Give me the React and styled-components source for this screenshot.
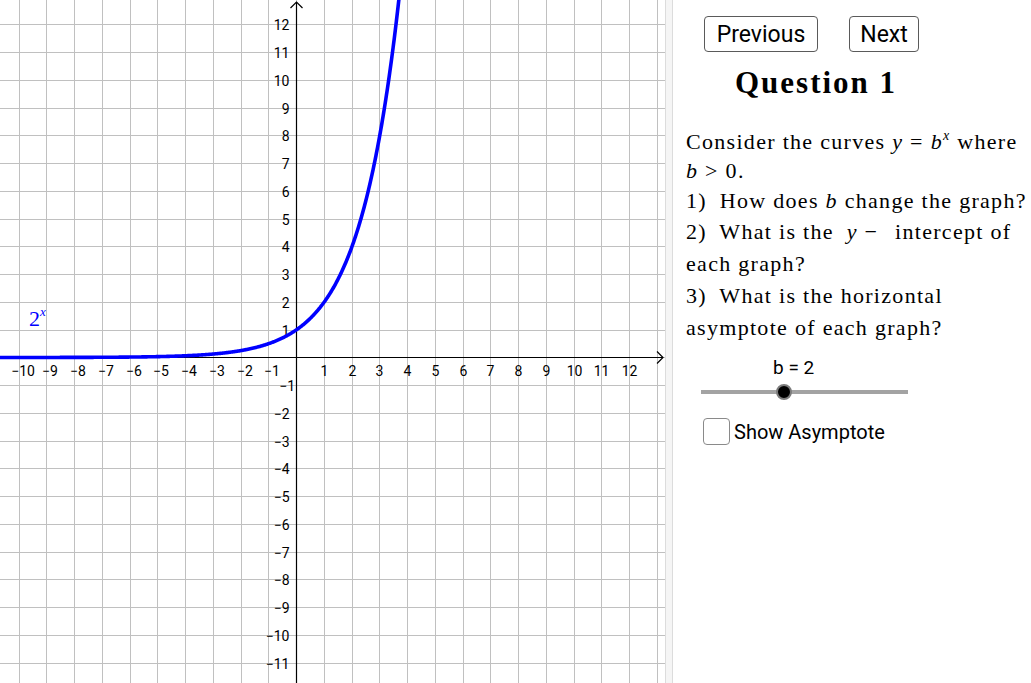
import React, { useState } from "react";
import styled, { createGlobalStyle } from "styled-components";

const GlobalStyle = createGlobalStyle`
  html, body {
    margin: 0;
    padding: 0;
    background: #ffffff;
    overflow: hidden;
  }
`;

const U = 27.75;
const OX = 296;
const OY = 357.3;
const W = 665;
const H = 683;

const px = (k) => Math.round(OX + k * U) + 0.5;
const py = (k) => Math.round(OY - k * U) + 0.5;

const Page = styled.div`
  display: flex;
  width: 1031px;
  height: 683px;
  font-family: Roboto, "Liberation Sans", sans-serif;
`;

const GraphPanel = styled.div`
  width: ${W}px;
  height: ${H}px;
  flex: none;
  background: #ffffff;
  overflow: hidden;
`;

const Divider = styled.div`
  width: 6px;
  flex: none;
  background: #f5f5f5;
  border-left: 1px solid #dcdcdc;
  border-right: 1px solid #dcdcdc;
`;

const SidePanel = styled.div`
  flex: 1;
  display: flex;
  flex-direction: column;
  padding-top: 16px;
`;

const ButtonRow = styled.div`
  display: flex;
  gap: 31px;
  padding-left: 31px;
`;

const NavButton = styled.button`
  width: ${({ $w }) => $w}px;
  height: 36px;
  padding: 0;
  background: #ffffff;
  border: 1.3px solid #5a5a5a;
  border-radius: 4px;
  font-family: Roboto, "Liberation Sans", sans-serif;
  font-size: 23px;
  color: #000000;
  cursor: pointer;

  &:hover {
    background: #f4f4f4;
  }
`;

const Title = styled.h1`
  margin: 13px 0 0 62px;
  font-family: "Liberation Serif", "DejaVu Serif", serif;
  font-weight: bold;
  font-size: 31px;
  line-height: 36px;
  letter-spacing: 2px;
  color: #000000;
`;

const Body = styled.div`
  margin-top: 26px;
  padding-left: 13px;
  font-family: "Liberation Serif", "DejaVu Serif", serif;
  font-size: 22px;
  letter-spacing: 1.3px;
  color: #000000;
  white-space: nowrap;
`;

const Line = styled.div`
  height: ${({ $h }) => $h}px;
  line-height: ${({ $h }) => $h}px;
`;

const M = styled.i`
  font-style: italic;
`;

const Sup = styled.sup`
  font-size: 14px;
  font-style: italic;
  vertical-align: 9px;
  line-height: 0;
`;

const Gap = styled.span`
  display: inline-block;
  width: ${({ $w }) => $w}px;
`;

const SliderBlock = styled.div`
  margin-top: 13px;
  display: flex;
  flex-direction: column;
`;

const SliderLabel = styled.div`
  padding-left: 100px;
  font-size: 19px;
  line-height: 22px;
  color: #000000;
`;

const Range = styled.input`
  -webkit-appearance: none;
  appearance: none;
  margin: 5px 0 0 20px;
  width: 223px;
  height: 16px;
  background: transparent;
  cursor: pointer;

  &::-webkit-slider-runnable-track {
    height: 16px;
    background: linear-gradient(#a3a3a3, #a3a3a3) 8px 50% / calc(100% - 16px) 4px no-repeat;
  }

  &::-webkit-slider-thumb {
    -webkit-appearance: none;
    width: 16px;
    height: 16px;
    border-radius: 50%;
    background: #000000;
    border: 2px solid #7c7c7c;
    box-sizing: border-box;
  }
`;

const CheckRow = styled.label`
  margin: 18px 0 0 30px;
  display: flex;
  align-items: center;
  gap: 4px;
  cursor: pointer;
  font-size: 20px;
  color: #000000;
`;

const HiddenInput = styled.input`
  display: none;
`;

const Box = styled.span`
  width: 27px;
  height: 27px;
  box-sizing: border-box;
  border: 1.5px solid #8a8a8a;
  border-radius: 4px;
  background: #ffffff;
  display: flex;
  align-items: center;
  justify-content: center;
`;

const fmt = (v) => `${Math.round(v * 10) / 10}`;

function Graph({ b, showAsymptote }) {
  const vLines = [];
  for (let k = -10; k <= 13; k++) vLines.push(k);
  const hLines = [];
  for (let k = -11; k <= 12; k++) hLines.push(k);

  const pts = [];
  if (b > 0) {
    for (let x = -10.9; x <= 13; x += 0.02) {
      const y = Math.pow(b, x);
      const sx = OX + 0.5 + x * U;
      const sy = OY + 0.2 - y * U;
      pts.push(`${sx.toFixed(2)},${sy.toFixed(2)}`);
      if (sy < -10 || sy > H + 10) {
        if (pts.length > 2) break;
      }
    }
  }

  return (
    <svg width={W} height={H} viewBox={`0 0 ${W} ${H}`}>
      <g stroke="#c0c0c0" strokeWidth="1">
        {vLines.map((k) => (
          <line key={`v${k}`} x1={px(k)} y1="0" x2={px(k)} y2={H} />
        ))}
        {hLines.map((k) => (
          <line key={`h${k}`} x1="0" y1={py(k)} x2={W} y2={py(k)} />
        ))}
      </g>

      <g stroke="#000000" strokeWidth="1.2" fill="none">
        <line x1="0" y1={py(0)} x2="663" y2={py(0)} />
        <polyline points={`657,${py(0) - 6} 663,${py(0)} 657,${py(0) + 6}`} />
        <line x1={px(0)} y1="2" x2={px(0)} y2={H} />
        <polyline points={`${px(0) - 6},8 ${px(0)},2 ${px(0) + 6},8`} />
      </g>

      <g fontFamily="Roboto, 'Liberation Sans', sans-serif" fontSize="14" fill="#000000">
        {vLines
          .filter((k) => k !== 0 && k <= 12)
          .map((k) => (
            <text
              key={`xl${k}`}
              x={k < 0 ? px(k) + 3.5 : px(k)}
              y={py(0) + 18}
              textAnchor="middle"
            >
              {k < 0 ? `\u2212${-k}` : k}
            </text>
          ))}
        {hLines
          .filter((k) => k !== 0)
          .map((k) => (
            <text
              key={`yl${k}`}
              x={k === -1 ? 295 : 289.5}
              y={py(k) + 5}
              textAnchor="end"
            >
              {k < 0 ? `\u2212${-k}` : k}
            </text>
          ))}
      </g>

      {showAsymptote && (
        <line
          x1="0"
          y1={py(0)}
          x2={W}
          y2={py(0)}
          stroke="#d00000"
          strokeWidth="2.5"
          strokeDasharray="8 6"
        />
      )}

      <polyline
        points={pts.join(" ")}
        fill="none"
        stroke="#0000ff"
        strokeWidth="3.6"
        strokeLinejoin="round"
      />

      <text
        x="29"
        y="325.5"
        fill="#0000ff"
        fontFamily="'Liberation Serif', serif"
        fontSize="22"
      >
        {fmt(b)}
        <tspan fontSize="13" fontStyle="italic" dy="-10">
          x
        </tspan>
      </text>
    </svg>
  );
}

export default function App() {
  const [b, setB] = useState(2);
  const [showAsymptote, setShowAsymptote] = useState(false);
  const [question, setQuestion] = useState(1);

  return (
    <>
      <GlobalStyle />
      <Page>
        <GraphPanel>
          <Graph b={b} showAsymptote={showAsymptote} />
        </GraphPanel>
        <Divider />
        <SidePanel>
          <ButtonRow>
            <NavButton $w={114} onClick={() => setQuestion((q) => Math.max(1, q - 1))}>
              Previous
            </NavButton>
            <NavButton $w={70} onClick={() => setQuestion((q) => q + 1)}>
              Next
            </NavButton>
          </ButtonRow>
          <Title>Question {question}</Title>
          <Body>
            <Line $h={29}>
              Consider the curves <M>y</M> = <M>b</M>
              <Sup>x</Sup> where
            </Line>
            <Line $h={29}>
              <M>b</M> &gt; 0.
            </Line>
            <Line $h={31}>
              1)<Gap $w={6} /> How does <M>b</M> change the graph?
            </Line>
            <Line $h={32}>
              2)<Gap $w={6} /> What is the<Gap $w={6} /> <M>y</M> −<Gap $w={10} /> intercept of
            </Line>
            <Line $h={32}>each graph?</Line>
            <Line $h={32}>
              3)<Gap $w={6} /> What is the horizontal
            </Line>
            <Line $h={32}>asymptote of each graph?</Line>
          </Body>
          <SliderBlock>
            <SliderLabel>b = {fmt(b)}</SliderLabel>
            <Range
              type="range"
              min="0"
              max="5"
              step="0.1"
              value={b}
              onChange={(e) => setB(parseFloat(e.target.value))}
            />
          </SliderBlock>
          <CheckRow>
            <HiddenInput
              type="checkbox"
              checked={showAsymptote}
              onChange={(e) => setShowAsymptote(e.target.checked)}
            />
            <Box>
              {showAsymptote && (
                <svg width="18" height="18" viewBox="0 0 18 18">
                  <polyline
                    points="3,9 7.5,13.5 15,4"
                    fill="none"
                    stroke="#333"
                    strokeWidth="2.4"
                  />
                </svg>
              )}
            </Box>
            Show Asymptote
          </CheckRow>
        </SidePanel>
      </Page>
    </>
  );
}
